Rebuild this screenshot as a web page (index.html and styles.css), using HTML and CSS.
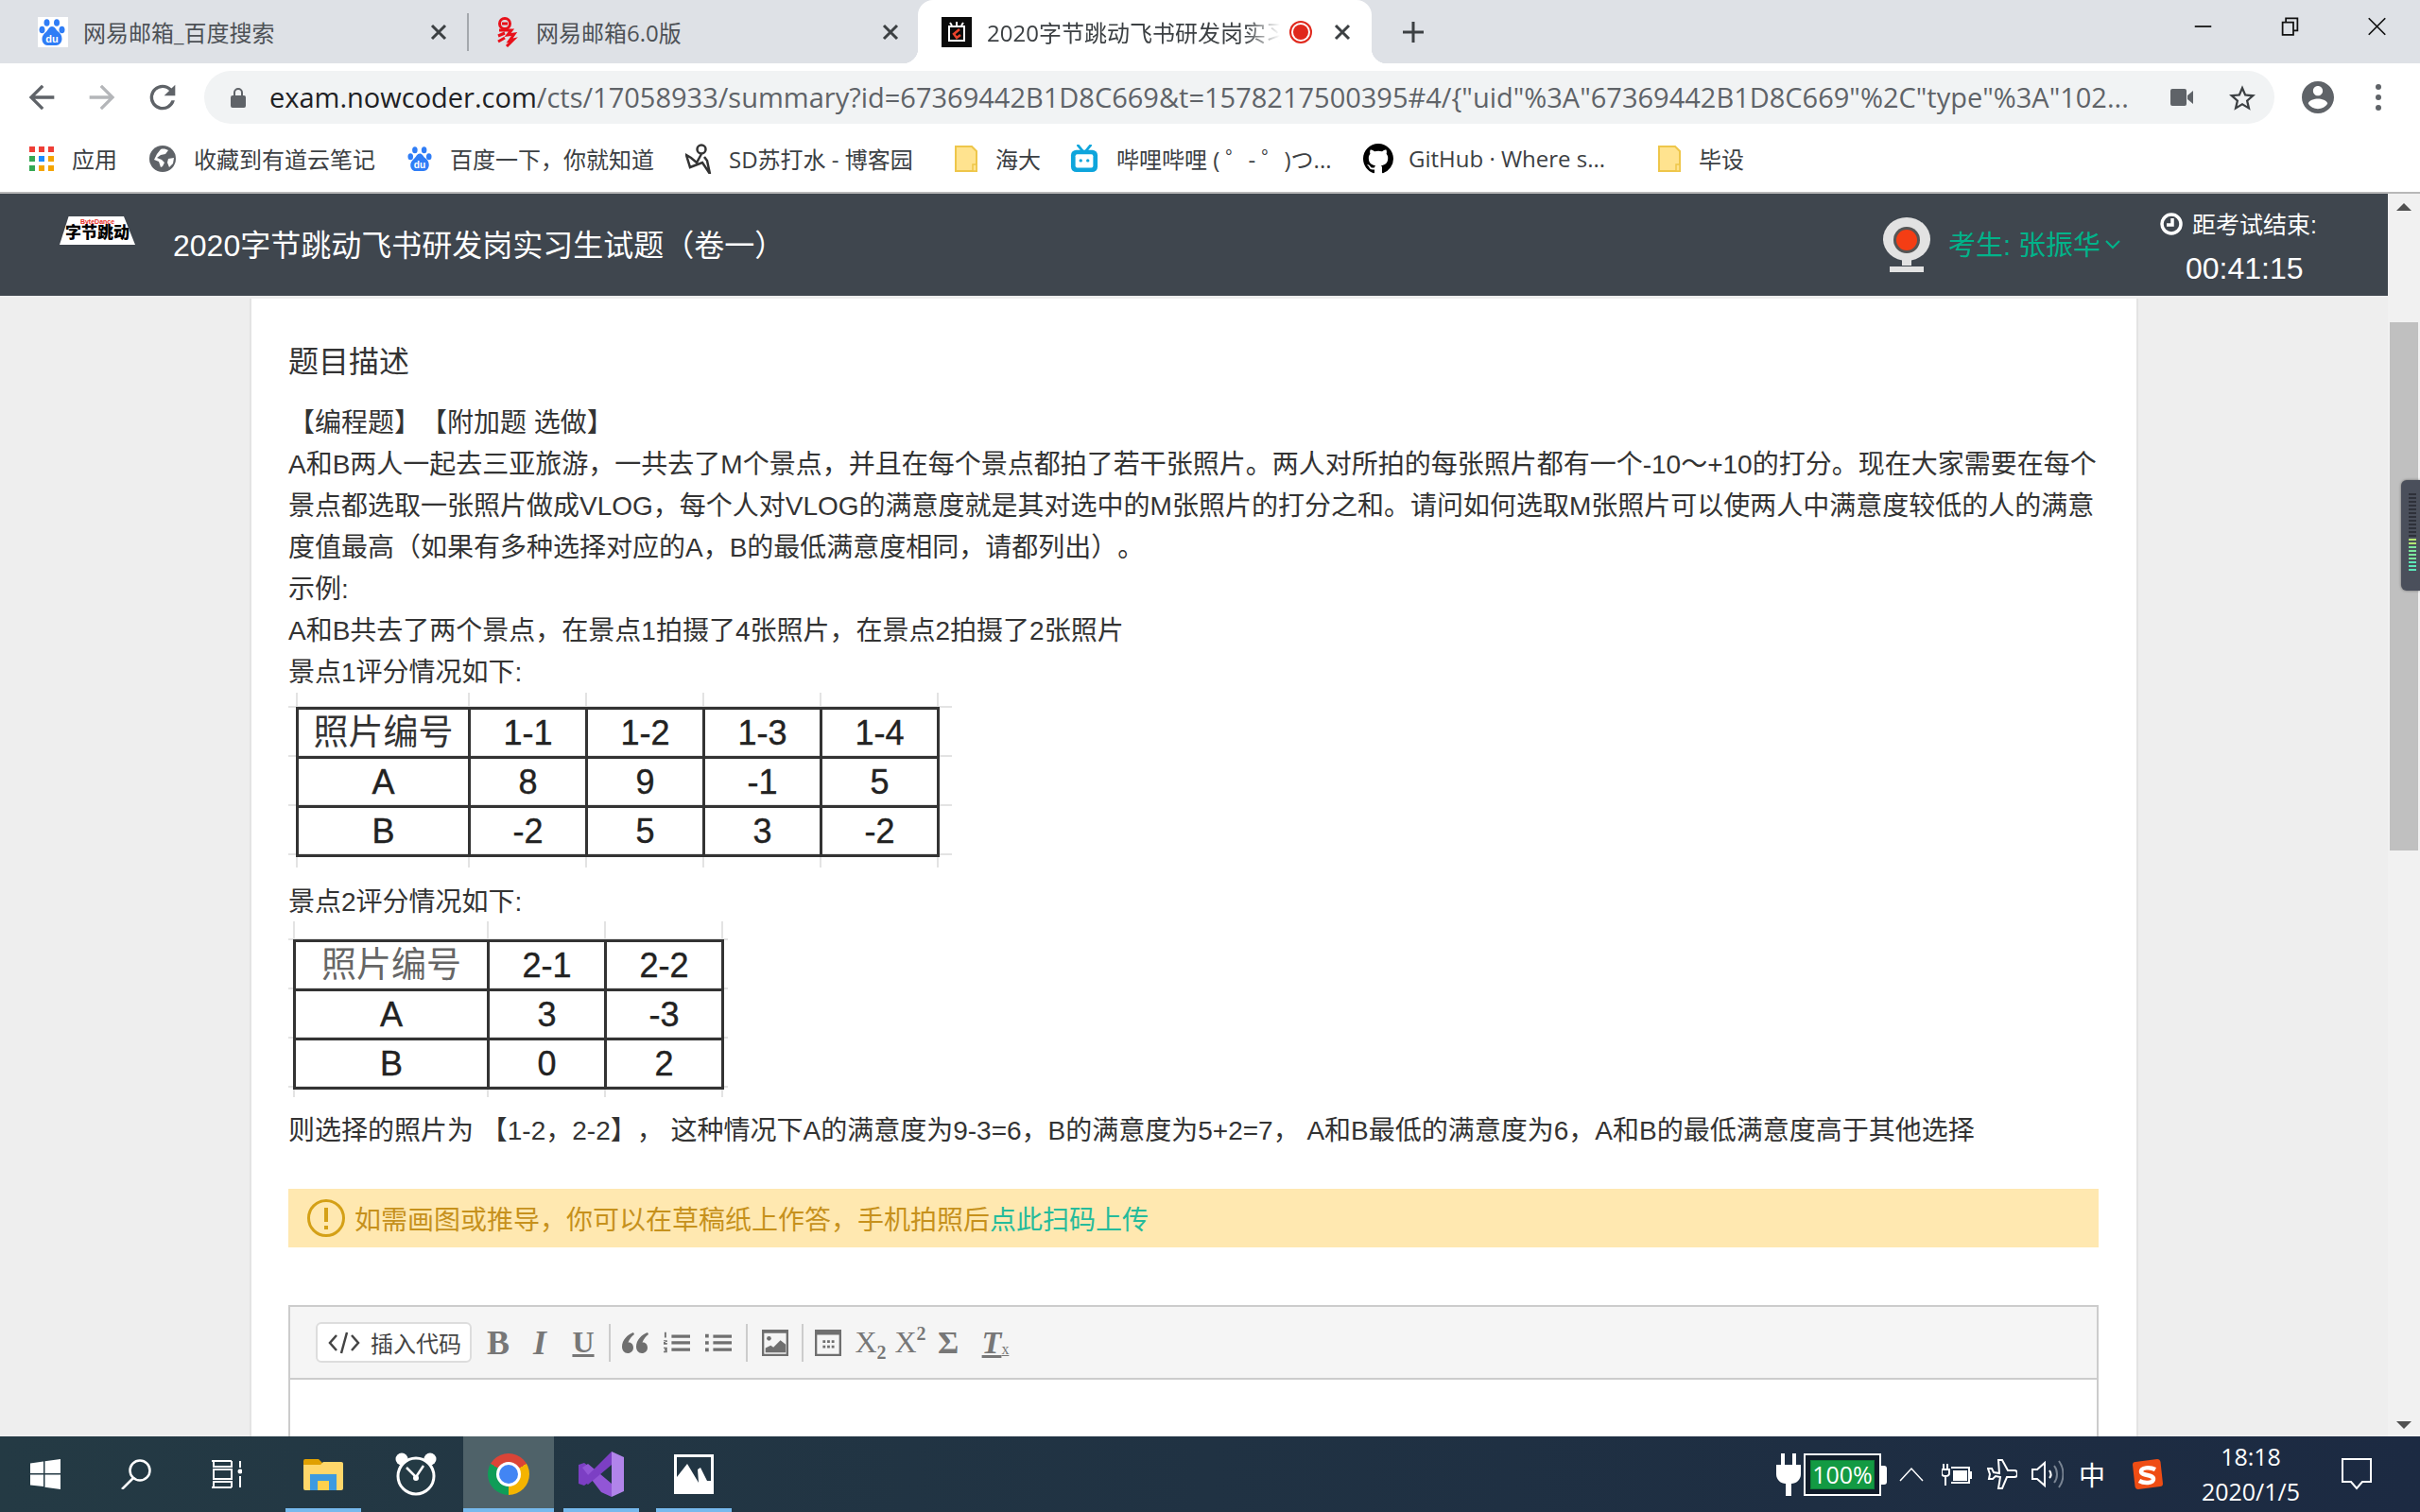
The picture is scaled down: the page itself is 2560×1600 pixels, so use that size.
FILE: index.html
```html
<!DOCTYPE html>
<html lang="zh-CN">
<head>
<meta charset="utf-8">
<title>2020字节跳动飞书研发岗实习生试题（卷一）</title>
<link rel="stylesheet" href="styles.css">
</head>
<body>
<header class="tabstrip">
  <div class="tab tab-one">
    <svg class="favicon favicon-white" viewBox="0 0 32 32">
      <ellipse cx="9.500" cy="6" rx="3" ry="3.800" fill="#2f7df6"/><ellipse cx="20" cy="6" rx="3" ry="3.800" fill="#2f7df6"/>
      <ellipse cx="4.500" cy="13.500" rx="3" ry="3.800" fill="#2f7df6"/><ellipse cx="25.500" cy="13.500" rx="3" ry="3.800" fill="#2f7df6"/>
      <path d="M15 10c3 0 4 3 6 5 2.500 2 4.500 4 4.500 8 0 4-3 7-6 7H10c-3 0-5.500-3-5.500-6.500 0-4 2.500-6 4.500-8 2-2 3-5.500 6-5.500z" fill="#2f7df6"/>
      <text x="15" y="27" text-anchor="middle" class="du">du</text>
    </svg>
    <span class="tab-title">网易邮箱_百度搜索</span>
    <svg class="tab-close" viewBox="0 0 24 24"><path d="M5 5l14 14M19 5L5 19"/></svg>
  </div>
  <div class="tab tab-two">
    <svg class="favicon" viewBox="0 0 32 32">
      <circle cx="15" cy="7" r="5.500" fill="none" stroke="#e8101a" stroke-width="3"/>
      <path d="M12 7h6M9 14h13l-4 5 7-1-5 7 4-1-7 7M8 20l7-3M8 26l7-4" fill="none" stroke="#e8101a" stroke-width="3"/>
    </svg>
    <span class="tab-title">网易邮箱6.0版</span>
    <svg class="tab-close" viewBox="0 0 24 24"><path d="M5 5l14 14M19 5L5 19"/></svg>
  </div>
  <div class="tab tab-active">
    <svg class="favicon" viewBox="0 0 32 32">
      <rect width="32" height="32" fill="#0b0b0b"/>
      <path d="M8 10h16v15H8z" fill="none" stroke="#fff" stroke-width="2"/>
      <path d="M9 6l2 3M16 5v4M23 6l-2 3" stroke="#fff" stroke-width="2"/>
      <path d="M19 13l-6 5 3 4 4-3" fill="none" stroke="#e9432c" stroke-width="2.500"/>
    </svg>
    <span class="tab-title tab-title-fade">2020字节跳动飞书研发岗实习生试题（卷一）</span>
    <span class="rec"></span>
    <svg class="tab-close" viewBox="0 0 24 24"><path d="M5 5l14 14M19 5L5 19"/></svg>
  </div>
  <svg class="new-tab" viewBox="0 0 24 24"><path d="M12 1v22M1 12h22"/></svg>
  <div class="window-controls">
    <div class="win-btn"><svg viewBox="0 0 24 24"><path d="M2 12h20"/></svg></div>
    <div class="win-btn"><svg viewBox="0 0 24 24"><path d="M3 7h13v15H3zM7 7V2h14v15h-5"/></svg></div>
    <div class="win-btn"><svg viewBox="0 0 24 24"><path d="M2 2l20 20M22 2L2 22"/></svg></div>
  </div>
</header>

<nav class="toolbar">
  <div class="nav-btn"><svg viewBox="0 0 24 24"><path d="M20 11H7.830l5.590-5.590L12 4l-8 8 8 8 1.410-1.410L7.830 13H20v-2z"/></svg></div>
  <div class="nav-btn nav-off"><svg viewBox="0 0 24 24"><path d="M4 11h12.170l-5.590-5.590L12 4l8 8-8 8-1.410-1.410L16.170 13H4v-2z"/></svg></div>
  <div class="nav-btn"><svg viewBox="0 0 24 24"><path d="M17.650 6.350A7.950 7.950 0 0 0 12 4a8 8 0 1 0 7.730 10h-2.080A6 6 0 1 1 12 6c1.660 0 3.140.69 4.220 1.780L13 11h7V4l-2.350 2.350z"/></svg></div>
  <div class="omnibox">
    <svg class="lock" viewBox="0 0 16 22"><path d="M3 9V6a5 5 0 0 1 10 0v3h1a2 2 0 0 1 2 2v9a2 2 0 0 1-2 2H2a2 2 0 0 1-2-2v-9a2 2 0 0 1 2-2zm2 0h6V6a3 3 0 0 0-6 0z"/></svg>
    <div class="url"><span class="url-host">exam.nowcoder.com</span>/cts/17058933/summary?id=67369442B1D8C669&amp;t=1578217500395#4/{"uid"%3A"67369442B1D8C669"%2C"type"%3A"102...</div>
    <svg class="omni-cam" viewBox="0 0 24 18"><path d="M0 2a2 2 0 0 1 2-2h13a2 2 0 0 1 2 2v14a2 2 0 0 1-2 2H2a2 2 0 0 1-2-2zM18 7l6-5v14l-6-5z"/></svg>
    <svg class="omni-star" viewBox="2 2 20 19"><path d="M22 9.240l-7.190-.62L12 2 9.190 8.630 2 9.240l5.460 4.730L5.820 21 12 17.270 18.180 21l-1.630-7.030L22 9.240zM12 15.400l-3.760 2.270 1-4.280-3.320-2.880 4.380-.38L12 6.100l1.710 4.040 4.380.38-3.320 2.880 1 4.280L12 15.400z"/></svg>
  </div>
  <div class="nav-btn"><svg class="account" viewBox="2 2 20 20"><path d="M12 2C6.480 2 2 6.480 2 12s4.480 10 10 10 10-4.480 10-10S17.520 2 12 2zm0 3c1.660 0 3 1.340 3 3s-1.340 3-3 3-3-1.340-3-3 1.340-3 3-3zm0 14.200c-2.500 0-4.710-1.280-6-3.220.03-1.990 4-3.080 6-3.080 1.990 0 5.970 1.090 6 3.080-1.290 1.940-3.500 3.220-6 3.220z"/></svg></div>
  <div class="nav-btn"><svg class="menu" viewBox="0 0 6 28"><circle cx="3" cy="3" r="3"/><circle cx="3" cy="14" r="3"/><circle cx="3" cy="25" r="3"/></svg></div>
</nav>

<div class="bookmarks">
  <div class="bm">
    <svg class="bm-icon" viewBox="0 0 26 26">
      <g fill="#ef3e36"><rect width="6" height="6"/><rect x="10" width="6" height="6"/><rect x="20" width="6" height="6"/></g>
      <rect y="10" width="6" height="6" fill="#34a853"/><rect x="10" y="10" width="6" height="6" fill="#1a8cff"/><rect x="20" y="10" width="6" height="6" fill="#f4a400"/>
      <rect y="20" width="6" height="6" fill="#34a853"/><rect x="10" y="20" width="6" height="6" fill="#f4a400"/><rect x="20" y="20" width="6" height="6" fill="#f4a400"/>
    </svg><span>应用</span>
  </div>
  <div class="bm">
    <svg class="bm-icon bm-globe" viewBox="0 0 28 28">
      <circle cx="14" cy="14" r="14" fill="#5f6368"/>
      <path d="M12 4c3-1 6 0 8 1l-3 4-5 1-4 3 5 2 3 3-2 4-2 1-2-6-5-2 3-6zM26 13l-6 1-1 4 2 5 4-4z" fill="#fff"/>
    </svg><span>收藏到有道云笔记</span>
  </div>
  <div class="bm">
    <svg class="bm-icon bm-paw" viewBox="1 1 28 30">
      <ellipse cx="9.500" cy="6" rx="3" ry="3.800" fill="#2f7df6"/><ellipse cx="20" cy="6" rx="3" ry="3.800" fill="#2f7df6"/>
      <ellipse cx="4.500" cy="13.500" rx="3" ry="3.800" fill="#2f7df6"/><ellipse cx="25.500" cy="13.500" rx="3" ry="3.800" fill="#2f7df6"/>
      <path d="M15 10c3 0 4 3 6 5 2.500 2 4.500 4 4.500 8 0 4-3 7-6 7H10c-3 0-5.500-3-5.500-6.500 0-4 2.500-6 4.500-8 2-2 3-5.500 6-5.500z" fill="#2f7df6"/>
      <text x="15" y="27" text-anchor="middle" class="du">du</text>
    </svg><span>百度一下，你就知道</span>
  </div>
  <div class="bm bm-sd">
    <svg class="bm-icon bm-sdicon" viewBox="0 0 29 32">
      <circle cx="17" cy="6" r="4.500" fill="none" stroke="#333" stroke-width="2.500"/>
      <path d="M17 11l-5 9-6-5-5-3 4 13 13-5 8 12-3-14-3-4" fill="none" stroke="#333" stroke-width="2.500"/>
    </svg><span>SD苏打水 - 博客园</span>
  </div>
  <div class="bm bm-short"><svg class="bm-icon bm-folder" viewBox="0 0 24 28"><path d="M1 1h17l5 5v21H1z" fill="#ffe38f" stroke="#eec64a" stroke-width="2"/><path d="M19 27v-7h4v7z" fill="#ffe38f" stroke="#eec64a" stroke-width="1.500"/></svg><span>海大</span></div>
  <div class="bm">
    <svg class="bm-icon bm-bili" viewBox="0 0 30 32">
      <path d="M8 1l5 6M22 1l-5 6" stroke="#0ea5dc" stroke-width="3" stroke-linecap="round"/>
      <rect y="6" width="30" height="25" rx="6" fill="#0ea5dc"/>
      <rect x="5" y="11" width="20" height="15" rx="2" fill="#fff"/>
      <circle cx="11" cy="18" r="1.800" fill="#0ea5dc"/><circle cx="19" cy="18" r="1.800" fill="#0ea5dc"/>
    </svg><span>哔哩哔哩 ( ゜- ゜)つ...</span>
  </div>
  <div class="bm bm-github">
    <svg class="bm-icon bm-gh" viewBox="0 0 16 16"><path d="M8 0C3.580 0 0 3.580 0 8c0 3.540 2.290 6.530 5.470 7.590.4.07.55-.17.55-.38 0-.19-.01-.82-.01-1.490-2.010.37-2.530-.49-2.690-.94-.09-.23-.48-.94-.82-1.130-.28-.15-.68-.52-.01-.53.63-.01 1.080.58 1.230.82.72 1.210 1.870.87 2.330.66.07-.52.28-.87.51-1.070-1.780-.2-3.640-.89-3.640-3.950 0-.87.31-1.590.82-2.150-.08-.2-.36-1.020.08-2.120 0 0 .67-.21 2.200.82.64-.18 1.320-.27 2-.27.68 0 1.360.09 2 .27 1.530-1.040 2.200-.82 2.200-.82.44 1.100.16 1.920.08 2.120.51.56.82 1.270.82 2.150 0 3.070-1.870 3.750-3.650 3.950.29.25.54.73.54 1.480 0 1.070-.01 1.930-.01 2.200 0 .21.15.46.55.38A8.013 8.013 0 0 0 16 8c0-4.420-3.580-8-8-8z"/></svg><span>GitHub · Where s...</span>
  </div>
  <div class="bm bm-short"><svg class="bm-icon bm-folder" viewBox="0 0 24 28"><path d="M1 1h17l5 5v21H1z" fill="#ffe38f" stroke="#eec64a" stroke-width="2"/><path d="M19 27v-7h4v7z" fill="#ffe38f" stroke="#eec64a" stroke-width="1.500"/></svg><span>毕设</span></div>
</div>

<div class="viewport">
  <div class="page">
    <div class="exam-header">
      <div class="logo"><span class="logo-en">ByteDance</span><span class="logo-cn">字节跳动</span></div>
      <div class="exam-title">2020字节跳动飞书研发岗实习生试题（卷一）</div>
      <div class="exam-right">
        <svg class="webcam" viewBox="0 0 50 58">
          <ellipse cx="25" cy="23" rx="25" ry="23" fill="#e2e2e2"/>
          <circle cx="25" cy="24" r="14" fill="#555"/>
          <circle cx="25" cy="24" r="11" fill="#f43d14"/>
          <path d="M20 44h10v7h-10z" fill="#e2e2e2"/>
          <rect x="7" y="52" width="36" height="6" fill="#e2e2e2"/>
        </svg>
        <div class="examinee">考生: 张振华</div>
        <svg class="chevron" viewBox="0 0 16 10"><path d="M1 1l7 7 7-7"/></svg>
        <div class="timer">
          <div class="timer-label">
            <svg class="clock" viewBox="0 0 24 24"><circle cx="12" cy="12" r="10"/><path d="M13 6v7H7"/></svg>
            <span>距考试结束:</span>
          </div>
          <div class="timer-value">00:41:15</div>
        </div>
      </div>
    </div>

    <div class="stage">
      <main class="card">
        <h1 class="q-title">题目描述</h1>
        <div class="q-body">
          <p>【编程题】【附加题 选做】</p>
          <p>A和B两人一起去三亚旅游，一共去了M个景点，并且在每个景点都拍了若干张照片。两人对所拍的每张照片都有一个-10～+10的打分。现在大家需要在每个景点都选取一张照片做成VLOG，每个人对VLOG的满意度就是其对选中的M张照片的打分之和。请问如何选取M张照片可以使两人中满意度较低的人的满意度值最高（如果有多种选择对应的A，B的最低满意度相同，请都列出）。</p>
          <p>示例:</p>
          <p>A和B共去了两个景点，在景点1拍摄了4张照片，在景点2拍摄了2张照片</p>
          <p>景点1评分情况如下:</p>
        </div>
        <figure class="sheet sheet-one">
          <svg class="sheet-grid" viewBox="0 0 702 185"><path d="M0 15H702M0 67H702M0 119H702M0 171H702M9 0V185M191 0V185M315 0V185M439 0V185M563 0V185M687 0V185"/></svg>
          <table class="score">
            <tr><td class="cell-head">照片编号</td><td>1-1</td><td>1-2</td><td>1-3</td><td>1-4</td></tr>
            <tr><td>A</td><td>8</td><td>9</td><td>-1</td><td>5</td></tr>
            <tr><td>B</td><td>-2</td><td>5</td><td>3</td><td>-2</td></tr>
          </table>
        </figure>
        <p class="q-line q-line-two">景点2评分情况如下:</p>
        <figure class="sheet sheet-two">
          <svg class="sheet-grid" viewBox="0 0 465 186"><path d="M0 19H465M0 71H465M0 123H465M0 175H465M6 0V186M211 0V186M335 0V186M459 0V186"/></svg>
          <table class="score">
            <tr><td class="cell-head cell-soft">照片编号</td><td>2-1</td><td>2-2</td></tr>
            <tr><td>A</td><td>3</td><td>-3</td></tr>
            <tr><td>B</td><td>0</td><td>2</td></tr>
          </table>
        </figure>
        <p class="q-line q-line-three">则选择的照片为 【1-2，2-2】， 这种情况下A的满意度为9-3=6，B的满意度为5+2=7， A和B最低的满意度为6，A和B的最低满意度高于其他选择</p>

        <div class="notice">
          <svg class="notice-icon" viewBox="0 0 40 40"><circle cx="20" cy="20" r="18.500"/><path d="M20 9v15M20 28v4"/></svg>
          <span>如需画图或推导，你可以在草稿纸上作答，手机拍照后<a class="notice-link">点此扫码上传</a></span>
        </div>

        <div class="editor">
          <div class="ed-toolbar">
            <button class="code-btn"><svg viewBox="0 0 34 24"><path d="M9 4L2 12l7 8M25 4l7 8-7 8M20 1l-6 22"/></svg><span>插入代码</span></button>
            <span class="tb tb-b">B</span>
            <span class="tb tb-i">I</span>
            <span class="tb tb-u">U</span>
            <i class="tb-sep tb-sep-a"></i>
            <span class="tb tb-quote"><svg viewBox="0 0 28 24"><path d="M12 1C6 3 0 9 0 16c0 4 2.500 7 6 7s6-2.500 6-6-2.500-6-5.500-5.500C8 8 10 5 13 3zM27 1c-6 2-12 8-12 15 0 4 2.500 7 6 7s6-2.500 6-6-2.500-6-5.500-5.500c1.500-3.500 3.500-6.500 6.500-8.500z"/></svg></span>
            <span class="tb tb-ol"><svg viewBox="0 0 30 24"><path d="M9 3h21v3.500H9zM9 10h21v3.500H9zM9 18h21v3.500H9zM1 0h2v6H1zM0 9h4v2H2v1h2v2H0v-3h2v-1H0zM0 17h4v6H0v-1.500h2V20.500H1v-1.500h1v-.5H0z"/></svg></span>
            <span class="tb tb-ul"><svg viewBox="0 0 30 24"><path d="M9 3h21v3.500H9zM9 10h21v3.500H9zM9 18h21v3.500H9zM0 2h4v4H0zM0 10h4v4H0zM0 18h4v4H0z"/></svg></span>
            <i class="tb-sep tb-sep-b"></i>
            <span class="tb tb-img"><svg viewBox="0 0 30 30"><path fill-rule="evenodd" d="M0 0h30v30H0zM2.500 4v23.500h25V4z"/><circle cx="8" cy="10" r="2.500"/><path d="M4 26v-5l6-3 3 2 8-8 6 5v9z"/></svg></span>
            <i class="tb-sep tb-sep-c"></i>
            <span class="tb tb-table"><svg viewBox="0 0 30 30"><path fill-rule="evenodd" d="M0 0h30v30H0zM2.500 6v21.500h25V6z"/><path d="M9 12h3v3H9zM14 12h3v3h-3zM19 12h3v3h-3zM9 18h3v3H9zM14 18h3v3h-3zM19 18h3v3h-3z"/></svg></span>
            <span class="tb tb-sub">X<sub>2</sub></span>
            <span class="tb tb-sup">X<sup>2</sup></span>
            <span class="tb tb-sigma">Σ</span>
            <span class="tb tb-clear"><em>T</em><small>x</small></span>
          </div>
          <div class="ed-body"></div>
        </div>
      </main>
    </div>
  </div>

  <aside class="scrollbar">
    <i class="sb-up"></i>
    <div class="sb-thumb"></div>
    <i class="sb-down"></i>
    <div class="meter">
      <i></i><i></i><i></i><i></i><i></i><i></i><i></i><i></i><i></i><i></i><i></i><i></i>
      <i class="m-lime"></i><i class="m-lime"></i><i class="m-green"></i><i class="m-green"></i><i class="m-green"></i><i class="m-green"></i><i class="m-teal"></i><i class="m-teal"></i><i class="m-teal"></i>
    </div>
  </aside>
</div>

<footer class="taskbar">
  <div class="task"><svg class="t-win" viewBox="0 0 32 32"><path d="M0 4.500l14-2V15H0zM15.500 2.300L32 0v15H15.500zM0 16.500h14V29L0 27.500zM15.500 16.500H32V32l-16.500-2.300z"/></svg></div>
  <div class="task"><svg class="t-search" viewBox="0 0 32 32"><circle cx="20" cy="12" r="10.500"/><path d="M13 20L1 32"/></svg></div>
  <div class="task"><svg class="t-view" viewBox="0 0 32 30"><path d="M0 1h21M2 1v6h19V1M2 10h19v10H2zM0 29h21M2 29v-6h19v6M30 1v7M30 17v12"/><circle cx="30" cy="12" r="2.500" fill="#fff" stroke="none"/></svg></div>
  <div class="task task-run task-first">
    <svg class="t-folder" viewBox="0 0 42 34">
      <path d="M0 3a2 2 0 0 1 2-2h14l4 4h20a2 2 0 0 1 2 2v5H0z" fill="#e0a000"/>
      <path d="M0 7h18l3-3h19a2 2 0 0 1 2 2v26a2 2 0 0 1-2 2H2a2 2 0 0 1-2-2z" fill="#ffd76a"/>
      <path d="M7 34V17h28v17h-8V24H15v10z" fill="#3d9ae0"/>
      <rect x="15" y="24" width="12" height="10" fill="#ffd14d"/>
    </svg>
  </div>
  <div class="task">
    <svg class="t-bear" viewBox="0 0 44 46">
      <circle cx="7" cy="7" r="6.500" fill="#fff"/><circle cx="37" cy="7" r="6.500" fill="#fff"/>
      <circle cx="22" cy="25" r="19" fill="#243a44" stroke="#fff" stroke-width="3"/>
      <path d="M12 16l10 10 8-12" fill="none" stroke="#fff" stroke-width="2.500"/>
      <circle cx="22" cy="27" r="3" fill="#fff"/>
    </svg>
  </div>
  <div class="task task-run task-active"><span class="chrome"><i></i></span></div>
  <div class="task task-run">
    <svg class="t-vs" viewBox="0 0 48 48">
      <path d="M0 14l6-2 4 3v18l-4 3-6-2z" fill="#7c3fc4"/>
      <path d="M35 48l-11-5L4 17l6-4 25 21z" fill="#9256d6"/>
      <path d="M35 0L4 31l6 4 25-21z" fill="#7c3fc4"/>
      <path d="M35 0l13 6v36l-13 6z" fill="#b184ea"/>
    </svg>
  </div>
  <div class="task task-run">
    <svg class="t-photo" viewBox="0 0 42 42">
      <path fill="#fff" fill-rule="evenodd" d="M0 0h42v42H0zM3 3v21l11-14 12 20-1-14 3-2 7 14h4V3z"/>
    </svg>
  </div>
  <div class="tray">
    <svg class="plug" viewBox="0 0 26 45"><path d="M5 0h4v12h8V0h4v12h5v10c0 6-5 10-10 10v13h-6V32C5 32 0 28 0 22V12h5z" fill="#fff"/></svg>
    <div class="battery"><div class="battery-fill">100%</div></div>
    <svg class="caret" viewBox="0 0 26 16"><path d="M1 15L13 2l12 13"/></svg>
    <svg class="batplug" viewBox="0 0 32 24"><path d="M10 5h19v16H10M29 10h2v6h-2M2 1v6M6 1v6M0 7h8v4c0 2-2 3-4 3s-4-1-4-3zM4 14v10"/><rect x="12" y="8" width="15" height="11" fill="#fff" stroke="none"/></svg>
    <svg class="plane" viewBox="0 0 32 32"><path d="M12 1h4l6 11h7c2 0 3 2 3 4s-1 3-3 3h-8l-5 12h-4l2-12-5-1-3 3H2l1-5-2-6h4l2 4 6 1z"/></svg>
    <svg class="speaker" viewBox="0 0 34 30"><path d="M1 10h5l8-7v24l-8-7H1z"/><path d="M19 11c2 3 2 6 0 8"/><path class="wave" d="M24 6c4 5 4 13 0 18M29 1c6 8 6 20 0 28"/></svg>
    <span class="ime">中</span>
    <svg class="sogou" viewBox="0 0 34 32"><path d="M5 3l23-3c2 0 3 1 3.500 3l2.500 23c0 2-1 3-3 3L8 32c-2 0-3-1-3.500-3L2 6c0-2 1-3 3-3z" fill="#ef4d14"/><path d="M26 11C20 8 11 9 11 13c0 5 13 3 13 8 0 5-10 5-15 2" fill="none" stroke="#fff" stroke-width="4.500"/></svg>
    <div class="clockbox"><div>18:18</div><div>2020/1/5</div></div>
    <svg class="notify" viewBox="0 0 32 34"><path d="M1 1h30v24h-9l-6 7-6-7H1z"/></svg>
  </div>
</footer>
</body>
</html>
```

FILE: styles.css
```css
* { box-sizing: border-box; }
html, body { margin: 0; height: 100%; overflow: hidden; }
body {
  display: flex;
  flex-direction: column;
  width: 2560px;
  height: 1600px;
  font-family: "Liberation Sans", "Noto Sans CJK SC", sans-serif;
  color: #333;
  background: #fff;
  text-spacing-trim: space-all;
}
.du { font: bold 11px "Liberation Sans", sans-serif; fill: #fff; }

/* tab strip */
.tabstrip {
  display: flex;
  align-items: center;
  flex: none;
  height: 67px;
  background: #dee1e6;
  font-family: "Open Sans", "Noto Sans CJK SC", sans-serif;
  font-size: 24px;
}
.tab { position: relative; display: flex; align-items: center; height: 67px; flex: none; gap: 16px; }
.tab-one { width: 496px; padding: 0 20px 0 40px; }
.tab-two { width: 475px; padding: 0 17px 0 23px; }
.tab-active { width: 480px; padding: 0 19px 0 25px; background: #fff; border-radius: 16px 16px 0 0; gap: 0; }
.tab-active::before, .tab-active::after { content: ""; position: absolute; bottom: 0; width: 16px; height: 16px; }
.tab-active::before { left: -16px; background: radial-gradient(circle at 0 0, transparent 16px, #fff 16.500px); }
.tab-active::after { right: -16px; background: radial-gradient(circle at 100% 0, transparent 16px, #fff 16.500px); }
.tab-one::after { content: ""; position: absolute; right: 0; top: 14px; height: 40px; width: 2px; background: #a4a8ad; }
.favicon { width: 32px; height: 32px; flex: none; }
.favicon-white { background: #fff; }
.tab-title { flex: 1; white-space: nowrap; overflow: hidden; color: #4d5156; }
.tab-title-fade { margin-left: 16px; color: #3c4043; -webkit-mask-image: linear-gradient(90deg, #000 88%, transparent 100%); mask-image: linear-gradient(90deg, #000 88%, transparent 100%); }
.rec { flex: none; width: 16px; height: 16px; margin: 0 24px 0 14px; border-radius: 50%; background: #e0281c; box-shadow: 0 0 0 2px #fff, 0 0 0 4px #e0281c; }
.tab-close { width: 24px; height: 24px; flex: none; fill: none; stroke: #3c4043; stroke-width: 3; }
.new-tab { width: 24px; height: 24px; margin-left: 32px; flex: none; fill: none; stroke: #3c4043; stroke-width: 3; }
.window-controls { display: flex; margin-left: auto; align-self: flex-start; }
.win-btn { width: 92px; height: 56px; display: flex; align-items: center; justify-content: center; }
.win-btn svg { width: 21px; height: 24px; fill: none; stroke: #111; stroke-width: 2; }

/* toolbar */
.toolbar { display: flex; flex: none; height: 64px; padding: 8px 12px 0; background: #fff; }
.nav-btn { width: 64px; height: 56px; flex: none; display: flex; align-items: center; justify-content: center; }
.nav-btn svg { width: 40px; height: 40px; fill: #5f6368; }
.nav-off svg { fill: #b4b6b9; }
.nav-btn .account { width: 34px; height: 34px; }
.nav-btn .menu { width: 6px; height: 28px; }
.omnibox { flex: 1; min-width: 0; height: 56px; margin: 0 14px 0 12px; padding: 0 20px 0 28px; display: flex; align-items: center; background: #f1f3f4; border-radius: 28px; }
.lock { width: 16px; height: 22px; flex: none; fill: #5f6368; }
.url { flex: 1; min-width: 0; margin: -2px 0 0 25px; font-family: "Open Sans", sans-serif; font-size: 29px; color: #5f6368; white-space: nowrap; overflow: hidden; }
.url-host { color: #202124; }
.omni-cam { width: 24px; height: 18px; flex: none; margin-left: 39px; fill: #5f6368; }
.omni-star { width: 28px; height: 27px; flex: none; margin-left: 38px; fill: #3c4043; }

/* bookmarks */
.bookmarks {
  display: grid;
  grid-template-columns: 127px 273px 295px 284px 122px 310px 312px 1fr;
  align-items: center;
  flex: none;
  height: 74px;
  padding: 1px 0 0 31px;
  border-bottom: 2px solid #b8b8b8;
  background: #fff;
  font-family: "Open Sans", "Noto Sans CJK SC", sans-serif;
  font-size: 24px;
  color: #3c4043;
}
.bm { display: flex; align-items: center; gap: 19px; white-space: nowrap; overflow: hidden; }
.bm-icon { width: 26px; height: 26px; flex: none; }
.bm-paw { height: 28px; }
.bm-globe { width: 28px; height: 28px; }
.bm-sd { gap: 17px; margin-left: -1px; }
.bm-sdicon { width: 29px; height: 32px; }
.bm-folder { width: 24px; height: 28px; }
.bm-bili { width: 30px; height: 30px; }
.bm-gh { width: 32px; height: 32px; }
.bm-github { gap: 16px; }

/* page */
.viewport { position: relative; display: flex; flex: 1; min-height: 0; }
.page { flex: 1; min-width: 0; display: flex; flex-direction: column; background: #eee; overflow: hidden; }
.exam-header { display: flex; align-items: center; flex: none; height: 108px; padding-left: 63px; background: #3f464e; color: #fff; }
.logo { position: relative; width: 80px; height: 30px; margin-top: -30px; background: #fff; clip-path: polygon(0 100%, 12% 0, 85% 0, 100% 100%); text-align: center; overflow: hidden; }
.logo-en { display: block; font-size: 7px; line-height: 7px; color: #e8302a; font-weight: bold; padding-top: 2px; }
.logo-cn { display: block; font-size: 17px; line-height: 18px; font-weight: 900; color: #000; white-space: nowrap; }
.exam-title { margin: -5px 0 0 40px; font-size: 32px; color: #fff; white-space: nowrap; }
.exam-right { display: flex; align-items: center; margin-left: auto; padding-right: 78px; }
.webcam { width: 50px; height: 58px; flex: none; }
.examinee { margin: -5px 0 0 19px; font-size: 29px; color: #00b38a; white-space: nowrap; }
.chevron { width: 16px; height: 10px; margin-left: 5px; flex: none; fill: none; stroke: #00b38a; stroke-width: 2; }
.timer { width: 163px; margin: 8px 0 0 42px; white-space: nowrap; }
.timer-label { display: flex; align-items: center; gap: 10px; font-size: 25px; line-height: 34px; }
.clock { width: 24px; height: 24px; flex: none; fill: none; stroke: #fff; stroke-width: 3.500; margin-top: -2px; }
.timer-value { font-size: 32px; line-height: 44px; margin-top: 7px; padding-left: 27px; }
.stage { flex: 1; min-height: 0; padding: 3px 0 0 264px; }
.card { width: 1998px; height: 2000px; padding: 0 40px 0 39px; background: #fff; border: solid #e3e3e3; border-width: 0 2px; }
.q-title { margin: 0; padding-top: 42px; font-size: 32px; line-height: 50px; font-weight: normal; color: #333; }
.q-body { margin-top: 18px; font-size: 28px; line-height: 44px; color: #333; }
.q-body p, .q-line { margin: 0; }
.q-line { font-size: 28px; line-height: 44px; white-space: nowrap; }
.q-line-two { margin-top: 15px; }
.q-line-three { margin-top: 14px; }
.sheet { position: relative; margin: 0; }
.sheet-one { width: 702px; height: 185px; margin-top: -1px; padding: 15px 0 0 8px; }
.sheet-two { width: 465px; height: 186px; margin-top: -2px; padding: 19px 0 0 5px; }
.sheet-grid { position: absolute; inset: 0; width: 100%; height: 100%; fill: none; stroke: #e3e3e3; stroke-width: 2; }
.score { position: relative; border-collapse: collapse; table-layout: fixed; font-size: 36px; color: #222; text-align: center; -webkit-text-stroke: 0.4px #222; }
.score td { height: 52px; width: 124px; padding: 0; border: 3px solid #333; line-height: 1; }
.sheet-one .score td:first-child { width: 182px; }
.sheet-two .score td:first-child { width: 205px; }
.score .cell-head { font-size: 37px; color: #333; -webkit-text-stroke: 0; }
.score .cell-soft { color: #666; }

.notice { display: flex; align-items: center; gap: 10px; height: 62px; margin-top: 39px; padding-left: 20px; background: #ffe8b0; font-size: 28px; color: #c6911c; }
.notice-icon { width: 40px; height: 40px; flex: none; fill: none; stroke: #d4a017; stroke-width: 3; }
.notice-icon path { stroke-width: 4; }
.notice-link { color: #25bb9b; }

.editor { margin-top: 61px; border: 2px solid #ccc; background: #fff; }
.ed-toolbar { display: flex; align-items: center; height: 77px; padding-left: 27px; background: #f5f5f5; border-bottom: 2px solid #ccc; }
.code-btn { display: flex; align-items: center; width: 165px; height: 43px; padding: 0 0 0 11px; gap: 11px; flex: none; background: #fff; border: 2px solid #ddd; border-radius: 6px; font: 24px "Noto Sans CJK SC", sans-serif; color: #444; }
.code-btn svg { width: 34px; height: 24px; fill: none; stroke: #444; stroke-width: 2.500; }
.tb { display: flex; align-items: center; justify-content: center; width: 44px; height: 40px; flex: none; font-family: "Liberation Serif", serif; font-size: 36px; color: #777; }
.tb svg { fill: #6f6f6f; width: 28px; height: 28px; }
.tb-b { margin-left: 6px; font-weight: bold; }
.tb-i { font-style: italic; font-weight: bold; }
.tb-u { margin-left: 2px; text-decoration: underline; font-size: 32px; font-weight: bold; }
.tb-sep { width: 2px; height: 40px; flex: none; background: #ccc; }
.tb-sep-a { margin-left: 5px; }
.tb-quote { margin-left: 4px; }
.tb-sep-b { margin-left: 7px; }
.tb-img { margin-left: 7px; }
.tb-sep-c { margin-left: 6px; }
.tb-table { margin-left: 4px; }
.tb-sub { margin-left: 1px; font-size: 32px; }
.tb-sub sub, .tb-sup sup { font-size: 20px; font-weight: bold; line-height: 20px; }
.tb-sub sub { align-self: flex-end; }
.tb-sup sup { align-self: flex-start; }
.tb-sup { width: 40px; font-size: 32px; }
.tb-sigma { width: 40px; font-size: 34px; font-weight: bold; }
.tb-clear { width: 40px; margin-left: 10px; font-size: 34px; font-weight: bold; text-decoration: underline; }
.tb-clear small { font-size: 16px; font-weight: normal; align-self: flex-end; text-decoration: none; margin-bottom: 4px; }
.ed-body { height: 200px; }

/* scrollbar */
.scrollbar { position: relative; width: 34px; flex: none; padding: 136px 2px 0; background: #f1f1f1; }
.sb-thumb { width: 30px; height: 559px; background: #c0c0c0; }
.sb-up, .sb-down { position: absolute; left: 9px; width: 0; height: 0; border: 8px solid transparent; }
.sb-up { top: 10px; border-bottom: 8px solid #505050; border-top-width: 0; }
.sb-down { bottom: 8px; border-top: 8px solid #505050; border-bottom-width: 0; }
.meter { position: absolute; top: 303px; right: 0; width: 20px; height: 117px; padding: 14px 4px 0 8px; display: flex; flex-direction: column; gap: 2px; background: #4a4f5b; border-radius: 6px 0 0 6px; box-shadow: 0 0 3px #666; }
.meter i { display: block; height: 2px; background: #2e313a; }
.meter .m-lime { background: #b4e672; }
.meter .m-green { background: #7be69c; }
.meter .m-teal { background: #5be6b8; }

/* taskbar */
.taskbar { display: flex; flex: none; align-items: center; height: 80px; gap: 2px; background: linear-gradient(90deg, #243a44, #1c2a42); }
.task { position: relative; display: flex; align-items: center; justify-content: center; width: 96px; height: 80px; flex: none; }
.task:nth-child(-n+3) { margin-right: -2px; }
.task-first { margin-left: 6px; }
.task-run::after { content: ""; position: absolute; left: 8px; right: 8px; bottom: 0; height: 4px; background: #76b9ed; }
.task-active { background: #4f6269; }
.task-active::after { left: 0; right: 0; }
.t-win { width: 32px; height: 32px; fill: #fff; }
.t-search { width: 32px; height: 32px; fill: none; stroke: #fff; stroke-width: 2.500; }
.t-view { width: 32px; height: 30px; fill: none; stroke: #fff; stroke-width: 2; }
.t-folder { width: 42px; height: 34px; }
.t-bear { width: 44px; height: 46px; }
.chrome { position: relative; display: block; width: 44px; height: 44px; border-radius: 50%; background: conic-gradient(from -60deg, #db4437 0 120deg, #f4b400 120deg 240deg, #0f9d58 240deg 360deg); }
.chrome i { position: absolute; inset: 12px; border-radius: 50%; background: #4285f4; box-shadow: 0 0 0 3px #fff; }
.t-vs { width: 48px; height: 48px; }
.t-photo { width: 42px; height: 42px; }
.tray { display: flex; align-items: center; margin-left: auto; padding-right: 51px; color: #fff; }
.plug { width: 26px; height: 45px; flex: none; }
.battery { position: relative; width: 82px; height: 45px; margin-left: 3px; padding: 5px; border: 2px solid #fff; background: #111c2a; flex: none; }
.battery::after { content: ""; position: absolute; top: 11px; right: -8px; width: 6px; height: 20px; background: #fff; border-radius: 0 3px 3px 0; }
.battery-fill { height: 100%; background: #139a43; border: 1px solid #0e7f37; font: 25px/29px "Open Sans", sans-serif; text-align: center; color: #fff; }
.caret { width: 26px; height: 16px; margin-left: 19px; flex: none; fill: none; stroke: #fff; stroke-width: 1.500; }
.batplug { width: 32px; height: 24px; margin-left: 19px; flex: none; fill: none; stroke: #fff; stroke-width: 2; }
.plane { width: 32px; height: 32px; margin-left: 16px; flex: none; fill: none; stroke: #fff; stroke-width: 2; }
.speaker { width: 34px; height: 30px; margin-left: 15px; flex: none; fill: none; stroke: #fff; stroke-width: 2; }
.speaker .wave { stroke: #7a8593; }
.ime { margin-left: 16px; width: 28px; font: 28px/30px "Noto Sans CJK SC", sans-serif; text-align: center; }
.sogou { width: 34px; height: 32px; margin-left: 27px; flex: none; }
.clockbox { width: 120px; margin-left: 33px; text-align: center; font: 25px/37px "Open Sans", sans-serif; color: #fff; white-space: nowrap; }
.notify { width: 32px; height: 34px; margin-left: 36px; flex: none; fill: none; stroke: #fff; stroke-width: 2; }
```
